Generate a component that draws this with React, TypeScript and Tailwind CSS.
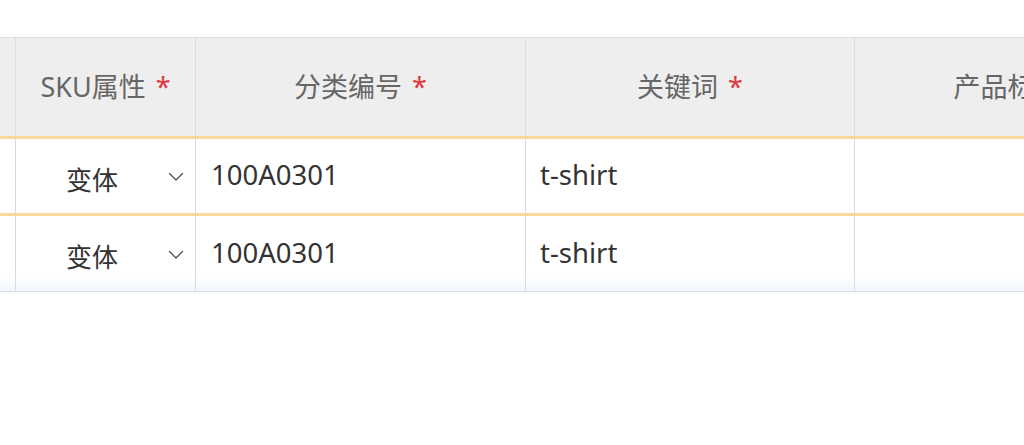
import React from "react";

const font = { fontFamily: '"Noto Sans", "Noto Sans CJK SC", sans-serif' };

function Star() {
  return <span className="ml-[10px] text-[#e0383e]">*</span>;
}

function Chevron() {
  return (
    <svg width="16" height="10" viewBox="0 0 16 10" fill="none">
      <path d="M1.5 1.5 L8 8 L14.5 1.5" stroke="#555" strokeWidth="1.4" strokeLinecap="round" strokeLinejoin="round" />
    </svg>
  );
}

function BodyRow({ last }: { last?: boolean }) {
  return (
    <div
      className={
        "flex " +
        (last
          ? "h-[76px] border-b border-[#d6dee8] bg-gradient-to-b from-white from-80% to-[#f3f7fb]"
          : "h-[77px] border-b-[3px] border-[#fbd79c]")
      }
    >
      <div className="w-[16px] shrink-0 border-r border-[#d3dde9]" />
      <div className="w-[180px] shrink-0 border-r border-[#d3dde9] flex items-center justify-between pl-[50px] pr-[11px] pt-[8px]">
        <span className="text-[26px] text-[#333]">变体</span>
        <span className="-mt-[6px]"><Chevron /></span>
      </div>
      <div className="w-[330px] shrink-0 border-r border-[#d3dde9] flex items-center pl-[15px] pb-[2px] text-[27.5px] text-[#333]">
        100A0301
      </div>
      <div className="w-[329px] shrink-0 border-r border-[#d3dde9] flex items-center pl-[14px] pb-[2px] text-[27.5px] text-[#333]">
        t-shirt
      </div>
      <div className="w-[330px] shrink-0" />
    </div>
  );
}

export default function App() {
  return (
    <div className="w-[1024px] h-[445px] bg-white overflow-hidden pt-[37px]" style={font}>
      <div className="w-[1200px] border-t border-[#d6dee8]">
        <div className="flex h-[101px] bg-[#eeeeef] border-b-[3px] border-[#fbd79c] text-[27px] text-[#666]">
          <div className="w-[16px] shrink-0 border-r border-[#d3dde9]" />
          <div className="w-[180px] shrink-0 border-r border-[#d3dde9] flex items-center justify-center">
            <span>SKU属性</span>
            <Star />
          </div>
          <div className="w-[330px] shrink-0 border-r border-[#d3dde9] flex items-center justify-center">
            <span>分类编号</span>
            <Star />
          </div>
          <div className="w-[329px] shrink-0 border-r border-[#d3dde9] flex items-center justify-center">
            <span>关键词</span>
            <Star />
          </div>
          <div className="w-[330px] shrink-0 flex items-center justify-center">
            <span>产品标题</span>
            <Star />
          </div>
        </div>
        <BodyRow />
        <BodyRow last />
      </div>
    </div>
  );
}
